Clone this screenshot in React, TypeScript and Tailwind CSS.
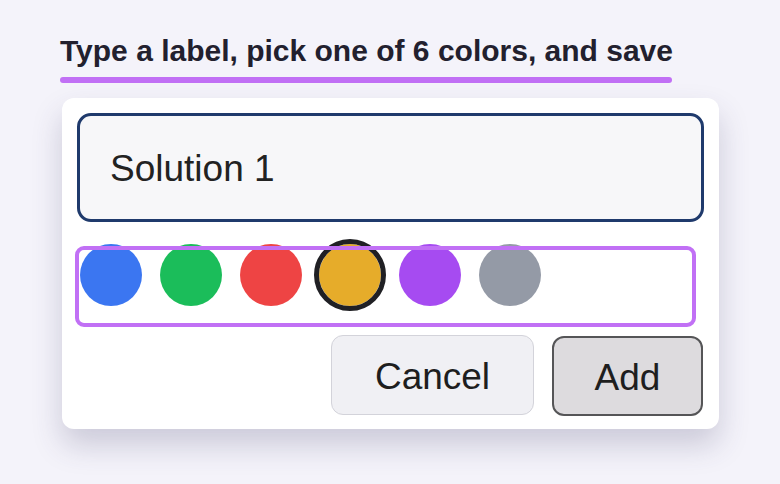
import { FC, useState } from "react";

const colors = ["#3b76f1", "#1bbd5a", "#ee4444", "#e6ac2a", "#a64bf1", "#949aa6"];

const ColorDot: FC<{ color: string; selected: boolean; onPick: () => void }> = ({
  color,
  selected,
  onPick,
}) => (
  <button
    type="button"
    onClick={onPick}
    className={`h-[62px] w-[62px] shrink-0 rounded-full ${
      selected ? "outline-[5px] outline-solid outline-[#202024]" : ""
    }`}
    style={{ backgroundColor: color }}
    aria-label={color}
  />
);

const App: FC = () => {
  const [picked, setPicked] = useState(3);

  return (
    <div className="min-h-[484px] w-full bg-[#f4f3fa] pt-[35px] font-['Liberation_Sans',Arial,sans-serif]">
      <div className="ml-[60px] w-[612px]">
        <h1 className="text-[30px] leading-[32px] font-bold text-[#22202e] whitespace-nowrap">
          Type a label, pick one of 6 colors, and save
        </h1>
        <div className="mt-[10px] h-[6px] rounded-full bg-[#c170f5]" />
      </div>

      <div className="mt-[15px] ml-[62px] w-[657px] rounded-[12px] bg-white p-[15px] pb-[13px] shadow-[0_16px_30px_rgba(60,55,100,0.22)]">
        <div className="flex h-[109px] items-center rounded-[14px] border-[3px] border-[#1f3a6c] bg-[#f7f7f9] pl-[30px] pt-[2px]">
          <span className="text-[37px] text-[#222222]">Solution 1</span>
        </div>

        <div className="relative mt-[22px] h-[82px]">
          <div className="flex gap-[17.8px] pl-[3px]">
            {colors.map((c, i) => (
              <ColorDot key={c} color={c} selected={i === picked} onPick={() => setPicked(i)} />
            ))}
          </div>
          <div className="pointer-events-none absolute top-[2px] left-[-2px] h-[81px] w-[621px] rounded-[9px] border-[4px] border-[#c170f5]" />
        </div>

        <div className="mt-[9px] flex justify-end gap-[18px] pr-[1px]">
          <button
            type="button"
            className="h-[80px] w-[203px] rounded-[12px] border border-[#d3d3da] bg-[#f0f0f4] pt-[4px] text-[37px] text-[#1e1e1e]"
          >
            Cancel
          </button>
          <button
            type="button"
            className="mt-[1px] h-[80px] w-[151px] rounded-[12px] border-2 border-[#555557] bg-[#dddbde] pt-[3px] text-[37px] text-[#1e1e1e]"
          >
            Add
          </button>
        </div>
      </div>
    </div>
  );
};

export default App;
